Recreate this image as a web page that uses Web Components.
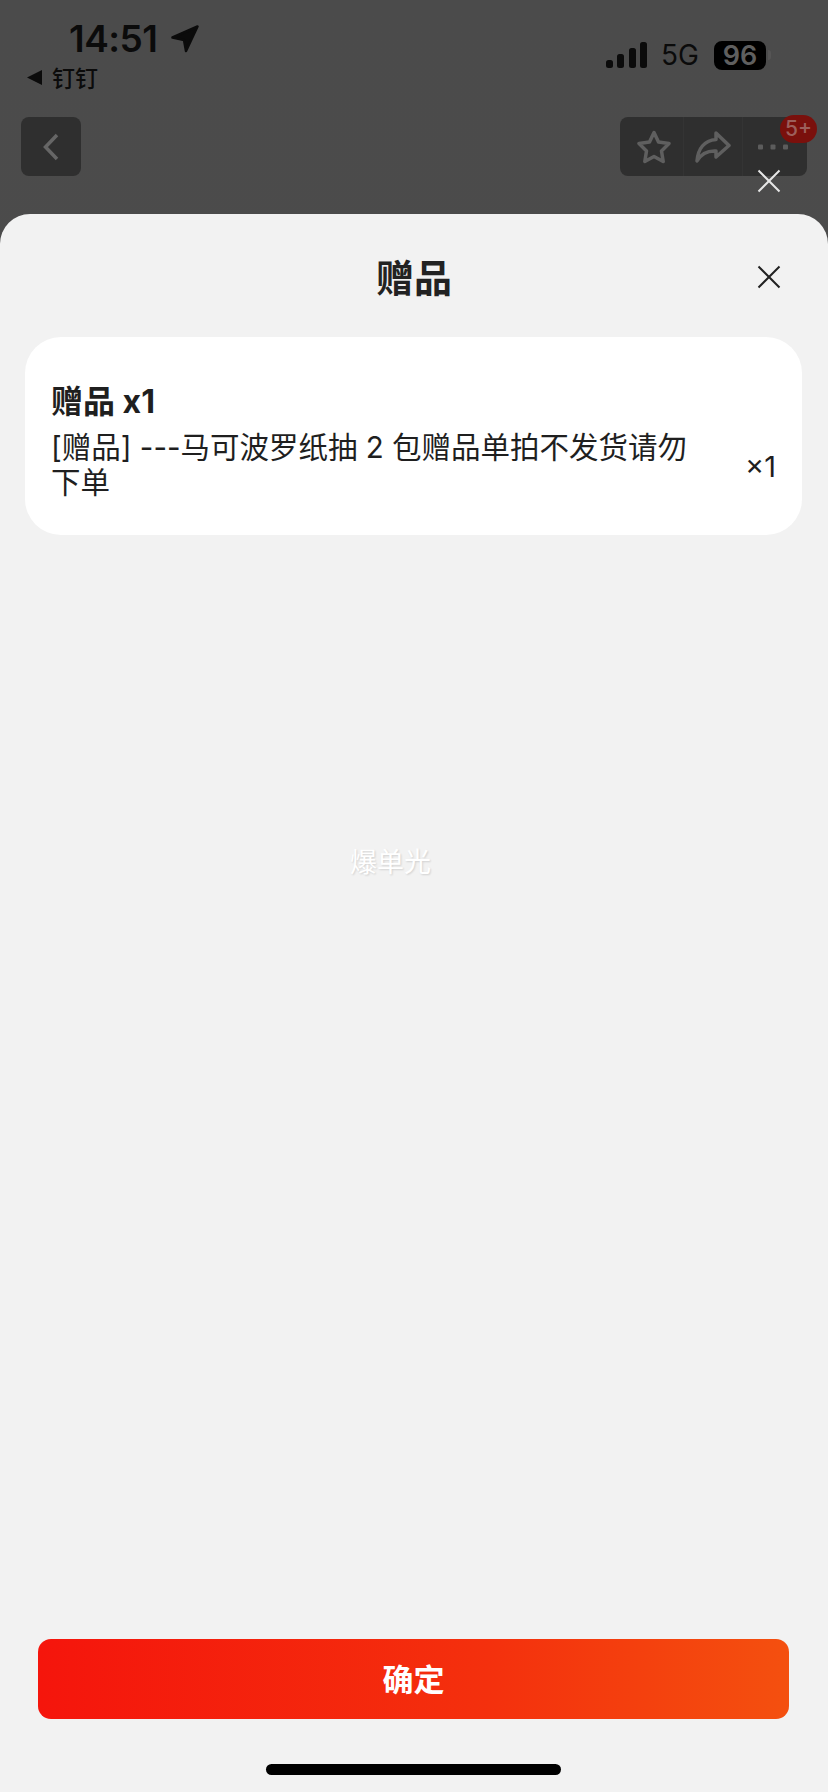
<!DOCTYPE html>
<html lang="zh">
<head>
<meta charset="utf-8">
<title>赠品</title>
<style>
  html, body { margin: 0; padding: 0; background: #4c4b4b; }
  body { font-family: "Noto Sans CJK SC", "Noto Sans", sans-serif; }
</style>
</head>
<body>
<gift-page>
  <status-bar slot="top"></status-bar>
  <nav-bar slot="top"></nav-bar>
  <gift-sheet heading="赠品">
    <gift-card title-text="赠品 x1" qty="×1">[赠品] ---马可波罗纸抽 2 包赠品单拍不发货请勿下单</gift-card>
  </gift-sheet>
</gift-page>

<script>
const closeIcon = color => `<svg width="24" height="24" viewBox="0 0 24 24" fill="none" stroke="${color}" stroke-width="2"><path d="M1.5 1.5 22.5 22.5M22.5 1.5 1.5 22.5"/></svg>`

class GiftPage extends HTMLElement {
  constructor () {
    super()
    this.attachShadow({ mode: 'open' }).innerHTML = /* html */`
      <style>
        :host {
          position: relative;
          display: flex;
          flex-direction: column;
          width: 828px;
          height: 1792px;
          overflow: hidden;
          background: linear-gradient(180deg, #4b4b4b, #4e4c4b);
        }
        .top { height: 214px; flex: none; }
      </style>
      <div class="top"><slot name="top"></slot></div>
      <slot></slot>
    `
  }
}

class StatusBar extends HTMLElement {
  constructor () {
    super()
    this.attachShadow({ mode: 'open' }).innerHTML = /* html */`
      <style>
        :host {
          display: flex;
          justify-content: space-between;
          height: 117px;
          color: #0b0b0b;
        }
        .left { padding: 18px 0 0 27px; }
        .time-row { display: flex; align-items: center; gap: 13px; padding-left: 42px; height: 42px; }
        .time { font: 600 37px/42px Inter, "Liberation Sans", sans-serif; letter-spacing: -.5px; }
        .carrier { display: flex; align-items: center; gap: 10px; height: 24px; margin-top: 5px; font-size: 23px; line-height: 24px; font-weight: 500; }
        .right { display: flex; align-items: center; height: 30px; margin: 40px 57px 0 0; }
        .net { margin: 0 15px 0 14px; font: 400 28px/30px Inter, "Liberation Sans", sans-serif; }
        .battery {
          width: 52px;
          height: 29px;
          border-radius: 8px;
          background: #000;
          color: #5f5f5f;
          text-align: center;
          font: 600 27px/29px Inter, "Liberation Sans", sans-serif;
        }
        .nub { width: 3px; height: 10px; margin-left: 2px; border-radius: 0 3px 3px 0; background: #565555; }
      </style>
      <div class="left">
        <div class="time-row">
          <span class="time">14:51</span>
          <svg width="28" height="28" viewBox="0 0 28 28"><path d="M26.500 1.500 15 26 13 15 1.500 12.500z" fill="#0b0b0b" stroke="#0b0b0b" stroke-width="2.500" stroke-linejoin="round"/></svg>
        </div>
        <div class="carrier">
          <svg width="15" height="15" viewBox="0 0 15 15"><path d="M0 7.500 15 0v15z" fill="#0b0b0b"/></svg>
          <span>钉钉</span>
        </div>
      </div>
      <div class="right">
        <svg width="41" height="26" viewBox="0 0 41 26" fill="#0b0b0b">
          <rect x="0" y="18" width="7" height="8" rx="2.500"/>
          <rect x="11" y="12" width="7" height="14" rx="2.500"/>
          <rect x="23" y="6" width="7" height="20" rx="2.500"/>
          <rect x="34" y="0" width="7" height="26" rx="2.500"/>
        </svg>
        <span class="net">5G</span>
        <span class="battery">96</span>
        <span class="nub"></span>
      </div>
    `
  }
}

class NavBar extends HTMLElement {
  constructor () {
    super()
    this.attachShadow({ mode: 'open' }).innerHTML = /* html */`
      <style>
        :host { display: flex; justify-content: space-between; padding: 0 21px; }
        .box { height: 59px; border-radius: 8px; background: #2f2f2f; display: flex; align-items: center; }
        .back { width: 60px; justify-content: center; }
        .actions { position: relative; width: 187px; }
        .cell { box-sizing: border-box; height: 100%; display: flex; align-items: center; justify-content: center; border-left: 1px solid #343434; }
        .star { width: 63px; border-left: none; padding-left: 4px; }
        .share { width: 59px; }
        .more { width: 65px; padding-right: 4px; }
        .badge {
          position: absolute;
          top: -2px;
          left: 160px;
          width: 37px;
          height: 28px;
          border-radius: 14px;
          background: #7a100c;
          color: #9c5f5b;
          text-align: center;
          font: 500 21px/28px Inter, "Liberation Sans", sans-serif;
        }
      </style>
      <div class="box back">
        <svg width="16" height="28" viewBox="0 0 16 28" fill="none" stroke="#666" stroke-width="3.500"><path d="M14 2 2.500 14 14 26"/></svg>
      </div>
      <div class="box actions">
        <div class="cell star">
          <svg width="34" height="34" viewBox="0 0 34 34" fill="none" stroke="#5f5f5f" stroke-width="3.500" stroke-linejoin="round"><path d="M17 2.500 21.500 12 32 13.500 24.500 21 26.200 31.500 17 26.500 7.800 31.500 9.500 21 2 13.500 12.500 12z"/></svg>
        </div>
        <div class="cell share">
          <svg width="36" height="32" viewBox="0 0 36 32" fill="none" stroke="#5f5f5f" stroke-width="3.500" stroke-linejoin="round"><path d="M21 2 34 14.500 21 26V20C12 19.500 6 23 2 30 3 18 9 9.500 21 8.500z"/></svg>
        </div>
        <div class="cell more">
          <svg width="30" height="6" viewBox="0 0 30 6" fill="#5c5c5c"><rect width="5" height="5" y=".5" rx="1"/><rect x="12.500" width="5" height="5" y=".5" rx="1"/><rect x="25" width="5" height="5" y=".5" rx="1"/></svg>
        </div>
        <span class="badge">5+</span>
      </div>
    `
  }
}

class GiftSheet extends HTMLElement {
  constructor () {
    super()
    this.attachShadow({ mode: 'open' }).innerHTML = /* html */`
      <style>
        :host {
          position: relative;
          flex: 1;
          display: flex;
          flex-direction: column;
          border-radius: 30px 30px 0 0;
          background: #f2f2f2;
        }
        .head {
          height: 123px;
          box-sizing: border-box;
          padding-bottom: 1px;
          display: flex;
          align-items: center;
          justify-content: center;
          color: #222;
          font-size: 38px;
          font-weight: 700;
        }
        .close { position: absolute; left: 757px; top: 51px; line-height: 0; }
        .dim-close { position: absolute; left: 757px; top: -45px; line-height: 0; }
        .body { flex: 1; }
        .confirm {
          height: 80px;
          margin: 0 39px 0 38px;
          border-radius: 13px;
          background: linear-gradient(90deg, #f5150c, #f4300d 60%, #f4500f);
          color: #fff;
          text-align: center;
          font-size: 31px;
          line-height: 78px;
          font-weight: 700;
        }
        .home { height: 73px; display: flex; align-items: flex-start; justify-content: center; }
        .bar { width: 295px; height: 11px; margin: 45px 1px 0 0; border-radius: 6px; background: #000; }
        .mark {
          position: absolute;
          left: 350px;
          top: 629px;
          color: #fff;
          font-size: 27px;
          line-height: 36px;
          text-shadow: 1px 1px 2px rgba(0, 0, 0, .14);
        }
      </style>
      <div class="head"></div>
      <span class="close"></span>
      <span class="dim-close"></span>
      <div class="body"><slot></slot></div>
      <div class="confirm">确定</div>
      <div class="home"><div class="bar"></div></div>
      <span class="mark">爆单光</span>
    `
    this.shadowRoot.querySelector('.close').innerHTML = closeIcon('#222')
    this.shadowRoot.querySelector('.dim-close').innerHTML = closeIcon('#e6e6e6')
  }

  connectedCallback () {
    this.shadowRoot.querySelector('.head').textContent = this.getAttribute('heading')
  }
}

class GiftCard extends HTMLElement {
  constructor () {
    super()
    this.attachShadow({ mode: 'open' }).innerHTML = /* html */`
      <style>
        :host {
          display: block;
          box-sizing: border-box;
          height: 198px;
          margin: 0 26px 0 25px;
          padding: 45px 26px 0 26px;
          border-radius: 36px;
          background: #fff;
          color: #1f1f1f;
          font-family: Inter, "Noto Sans CJK SC", sans-serif;
        }
        .title { font-size: 32px; line-height: 40px; font-weight: 700; }
        .row { display: flex; align-items: center; justify-content: space-between; margin-top: 8px; }
        .desc { width: 645px; font-size: 29.500px; line-height: 35px; }
        .qty { font-size: 29px; line-height: 35px; padding-top: 2px; }
      </style>
      <div class="title"></div>
      <div class="row">
        <div class="desc"><slot></slot></div>
        <div class="qty"></div>
      </div>
    `
  }

  connectedCallback () {
    this.shadowRoot.querySelector('.title').textContent = this.getAttribute('title-text')
    this.shadowRoot.querySelector('.qty').textContent = this.getAttribute('qty')
  }
}

customElements.define('gift-page', GiftPage)
customElements.define('status-bar', StatusBar)
customElements.define('nav-bar', NavBar)
customElements.define('gift-sheet', GiftSheet)
customElements.define('gift-card', GiftCard)
</script>
</body>
</html>
